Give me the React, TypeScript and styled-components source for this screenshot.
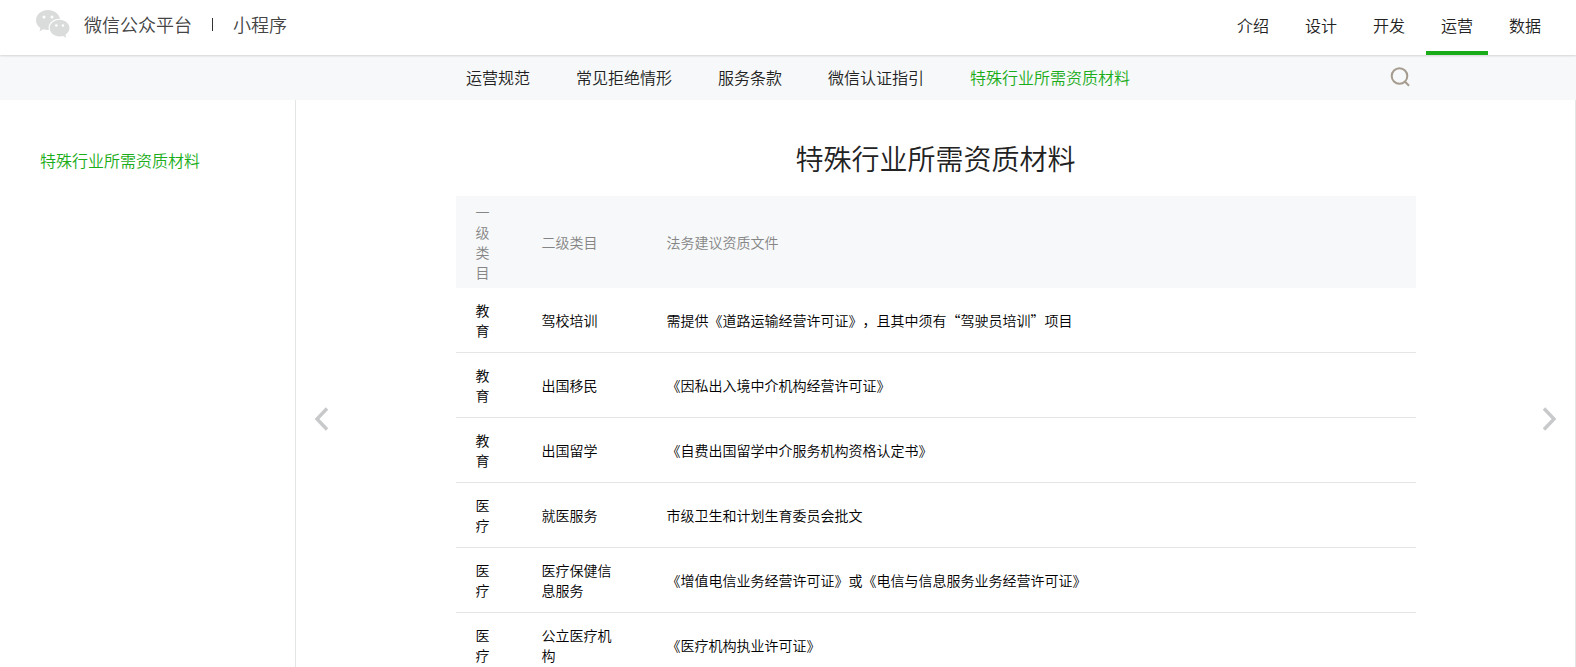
import React from "react";
import styled, { createGlobalStyle } from "styled-components";

const GlobalStyle = createGlobalStyle`
  *, *::before, *::after { box-sizing: border-box; }
  body {
    margin: 0;
    background: #fff;
    color: #222;
    font: 350 16px/24px "Noto Sans CJK SC", sans-serif;
    text-spacing-trim: space-all;
  }
  a { color: inherit; text-decoration: none; }
`;

const Page = styled.div`
  display: flex;
  flex-direction: column;
  min-height: 100vh;
`;

const Header = styled.header`
  position: relative;
  display: flex;
  justify-content: space-between;
  flex: none;
  height: 55px;
  padding: 0 20px 0 36px;
  background: #fff;
  box-shadow: 0 1px 2px rgba(0, 0, 0, 0.15);
`;

const Brand = styled.a`
  display: flex;
  align-items: center;
  height: 48px;
  font-size: 18px;
  color: #444;
`;

const Logo = styled.svg`
  width: 34px;
  height: 30px;
  margin-right: 14px;
`;

const Divider = styled.span`
  width: 1px;
  height: 13px;
  margin: 0 20px;
  background: #333;
`;

const TopNav = styled.nav`
  display: flex;
  gap: 6px;
`;

const TopLink = styled.a<{ $active?: boolean }>`
  padding: 13px 15px 0;
  border-bottom: 4px solid ${(p) => (p.$active ? "#1aad19" : "transparent")};
`;

const SubBar = styled.div`
  display: flex;
  flex: none;
  justify-content: center;
  height: 45px;
  background: #f6f8f9;
`;

const SubInner = styled.div`
  display: flex;
  align-items: center;
  justify-content: space-between;
  width: 960px;
  height: 43px;
  margin-left: 296px;
  padding: 0 6px 0 10px;
`;

const SubNav = styled.nav`
  display: flex;
  gap: 46px;
`;

const SubLink = styled.a<{ $active?: boolean }>`
  color: ${(p) => (p.$active ? "#1aad19" : "#222")};
`;

const SearchButton = styled.button`
  display: flex;
  padding: 0;
  border: 0;
  background: none;
  cursor: pointer;
`;

const Body = styled.div`
  display: flex;
  flex: 1;
`;

const Sidebar = styled.aside`
  flex: none;
  width: 296px;
  padding: 48px 40px;
  border-right: 1px solid #e4e6e6;
  color: #1aad19;
`;

const Content = styled.main`
  display: flex;
  flex: 1;
  justify-content: space-between;
  min-width: 0;
  border-right: 1px solid #e4e6e6;
`;

const PageTurn = styled.button`
  align-self: flex-start;
  display: flex;
  margin: 307px 18px 0;
  padding: 0;
  border: 0;
  background: none;
  cursor: pointer;
`;

const Article = styled.article`
  width: 960px;
`;

const Title = styled.h1`
  margin: 36px 0 16px;
  font-size: 28px;
  line-height: 44px;
  font-weight: 350;
  text-align: center;
`;

const Table = styled.table`
  width: 100%;
  border-collapse: separate;
  border-spacing: 0;
  table-layout: fixed;
  font-size: 14px;
  line-height: 20px;
  text-align: left;
`;

const HeadCell = styled.th<{ $width?: number }>`
  width: ${(p) => (p.$width ? `${p.$width}px` : "auto")};
  padding: 6px 30px 6px 20px;
  background: #f6f8f9;
  color: #858585;
  font-weight: 350;
`;

const Cell = styled.td`
  padding: 12px 30px 12px 20px;
  border-bottom: 1px solid #e4e6e6;
  color: #000;
`;

const topLinks = ["介绍", "设计", "开发", "运营", "数据"];
const subLinks = ["运营规范", "常见拒绝情形", "服务条款", "微信认证指引", "特殊行业所需资质材料"];

const rows = [
  ["教育", "驾校培训", "需提供《道路运输经营许可证》，且其中须有“驾驶员培训”项目"],
  ["教育", "出国移民", "《因私出入境中介机构经营许可证》"],
  ["教育", "出国留学", "《自费出国留学中介服务机构资格认定书》"],
  ["医疗", "就医服务", "市级卫生和计划生育委员会批文"],
  ["医疗", "医疗保健信息服务", "《增值电信业务经营许可证》或《电信与信息服务业务经营许可证》"],
  ["医疗", "公立医疗机构", "《医疗机构执业许可证》"],
];

const Chevron = ({ points }: { points: string }) => (
  <svg width="14" height="24" viewBox="0 0 14 24" fill="none" stroke="#c8c9ca" strokeWidth="3.4">
    <polyline points={points} />
  </svg>
);

export default function App() {
  return (
    <Page lang="zh-CN">
      <GlobalStyle />
      <Header>
        <Brand href="#">
          <Logo viewBox="0 0 34 30" aria-hidden="true">
            <path
              fill="#d9dcdb"
              d="M12 1C5.400 1 0 5.500 0 11.200c0 3.200 1.700 6 4.400 7.900L3.400 22.400l3.900-2.100c1.500.4 3 .8 4.700.8h.9a8.300 8.300 0 0 1-.3-2.200c0-5.100 4.800-9.100 10.700-9.100h.8C22.900 4.800 17.900 1 12 1z"
            />
            <path
              fill="#d9dcdb"
              d="M33.500 19.100c0-4.600-4.500-8.300-9.900-8.300s-9.900 3.700-9.900 8.300 4.400 8.300 9.900 8.300c1.200 0 2.400-.2 3.500-.5l3.100 1.800-.8-3c2.500-1.500 4.100-4 4.100-6.600z"
            />
            <g fill="#fff">
              <circle cx="8" cy="8" r="1.500" />
              <circle cx="16" cy="8" r="1.500" />
              <circle cx="20.300" cy="16.500" r="1.300" />
              <circle cx="26.900" cy="16.500" r="1.300" />
            </g>
          </Logo>
          微信公众平台
          <Divider />
          小程序
        </Brand>
        <TopNav>
          {topLinks.map((t) => (
            <TopLink key={t} href="#" $active={t === "运营"}>
              {t}
            </TopLink>
          ))}
        </TopNav>
      </Header>
      <SubBar>
        <SubInner>
          <SubNav>
            {subLinks.map((t, i) => (
              <SubLink key={t} href="#" $active={i === 4}>
                {t}
              </SubLink>
            ))}
          </SubNav>
          <SearchButton aria-label="搜索">
            <svg width="20" height="20" viewBox="0 0 20 20" fill="none" stroke="#a69b8f" strokeWidth="2">
              <circle cx="9.500" cy="9" r="7.800" />
              <path d="M14.800 14.500l4.200 4.200" />
            </svg>
          </SearchButton>
        </SubInner>
      </SubBar>
      <Body>
        <Sidebar>
          <a href="#">特殊行业所需资质材料</a>
        </Sidebar>
        <Content>
          <PageTurn aria-label="上一页">
            <Chevron points="13,1.500 3,12 13,22.500" />
          </PageTurn>
          <Article>
            <Title>特殊行业所需资质材料</Title>
            <Table>
              <thead>
                <tr>
                  <HeadCell $width={66}>一级类目</HeadCell>
                  <HeadCell $width={125}>二级类目</HeadCell>
                  <HeadCell>法务建议资质文件</HeadCell>
                </tr>
              </thead>
              <tbody>
                {rows.map((row) => (
                  <tr key={row[1]}>
                    {row.map((text, i) => (
                      <Cell key={i}>{text}</Cell>
                    ))}
                  </tr>
                ))}
              </tbody>
            </Table>
          </Article>
          <PageTurn aria-label="下一页">
            <Chevron points="1,1.500 11,12 1,22.500" />
          </PageTurn>
        </Content>
      </Body>
    </Page>
  );
}
